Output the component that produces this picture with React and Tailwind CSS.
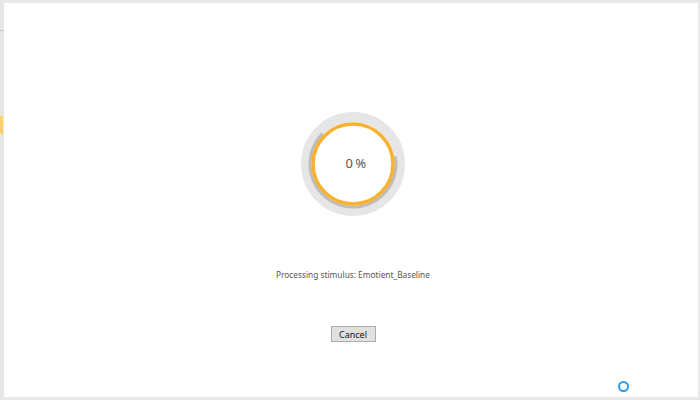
const ProgressRing = ({ percent = 0 }) => (
    <div className="relative w-[104px] h-[104px]">
        <svg width="104" height="104" viewBox="0 0 104 104" className="block">
            <circle cx="52" cy="52" r="47" fill="none" stroke="#e6e6e6" strokeWidth="10" />
            <path d="M21.6 21.6 A43 43 0 1 0 94.3 44.5" fill="none" stroke="#bdbdbd" strokeWidth="3" />
            <circle cx="52" cy="52" r="40" fill="#ffffff" stroke="#f9b130" strokeWidth="3.6" />
        </svg>
        <div className="absolute inset-0 pl-[5px] flex items-center justify-center text-[13px] tracking-[-0.6px] text-[#555] font-['Noto_Sans',sans-serif]">
            {percent} %
        </div>
    </div>
);

export default function App() {
    return (
        <div className="w-[700px] h-[400px] flex flex-col bg-[#e8e8e8] overflow-hidden font-['Noto_Sans',sans-serif]">
            <div className="h-[3px] shrink-0" />
            <div className="flex flex-1 min-h-0">
                <div className="w-[4px] shrink-0 flex flex-col bg-[#e6e6e6]">
                    <div className="h-[27px]" />
                    <div className="h-px bg-[#c8c8c8]" />
                    <div className="h-[85px]" />
                    <div className="h-[18px] w-[3px] bg-[#ffd36a]" />
                </div>
                <div className="relative flex-1 bg-white flex flex-col items-center pl-[4px] pt-[109px]">
                    <ProgressRing percent={0} />
                    <p className="mt-[53px] text-[8.3px] leading-[12px] text-[#555]">
                        Processing stimulus: Emotient_Baseline
                    </p>
                    <button
                        type="button"
                        className="mt-[45px] w-[45px] h-[16px] flex items-center justify-center bg-[#e1e1e1] border border-[#adadad] text-[9px] leading-none text-[#111]"
                    >
                        Cancel
                    </button>
                    <div className="absolute left-[614px] top-[378px] w-[11px] h-[11px] rounded-full border-[2.5px] border-[#2a9df4]" />
                </div>
                <div className="w-[2px] shrink-0" />
            </div>
            <div className="h-[3px] shrink-0" />
        </div>
    );
}
